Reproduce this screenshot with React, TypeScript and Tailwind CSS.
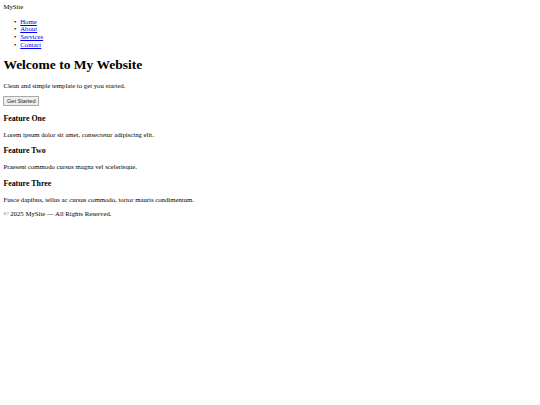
export default function App() {
  const links = ['Home', 'About', 'Services', 'Contact'];
  const features = [
    { title: 'Feature One', text: 'Lorem ipsum dolor sit amet, consectetur adipiscing elit.' },
    { title: 'Feature Two', text: 'Praesent commodo cursus magna vel scelerisque.' },
    { title: 'Feature Three', text: 'Fusce dapibus, tellus ac cursus commodo, tortor mauris condimentum.' },
  ];

  return (
    <div className="min-h-[405px] bg-white text-black">
      {/* page is a 1280px-wide default-styled document shown at 540px */}
      <div className="[zoom:0.421875] p-[8px] font-['Liberation_Serif',serif] text-[16px] leading-[18px]">
        <header>
          <div>MySite</div>
          <nav>
            <ul className="my-[16px] pl-[40px]">
              {links.map((l) => (
                <li key={l}>
                  <span className="-ml-[15px] inline-block w-[15px]">•</span>
                  <a href="#" className="text-[#0000ee] underline">
                    {l}
                  </a>
                </li>
              ))}
            </ul>
          </nav>
        </header>
        <main>
          <section>
            <h1 className="my-[21.44px] text-[32px] font-bold leading-[37px]">Welcome to My Website</h1>
            <p className="my-[16px]">Clean and simple template to get you started.</p>
            <button className="rounded-[2px] border border-[#a9a9a9] bg-[#efefef] px-[6px] py-[2px] font-['Liberation_Sans',sans-serif] text-[13.333px] leading-[15px] text-[#222]">
              Get Started
            </button>
          </section>
          {features.map((f) => (
            <section key={f.title}>
              <h3 className="my-[18.72px] text-[18.72px] font-bold leading-[21.5px]">{f.title}</h3>
              <p className="my-[16px]">{f.text}</p>
            </section>
          ))}
        </main>
        <footer>
          <p className="my-[16px]">© 2025 MySite — All Rights Reserved.</p>
        </footer>
      </div>
    </div>
  );
}
